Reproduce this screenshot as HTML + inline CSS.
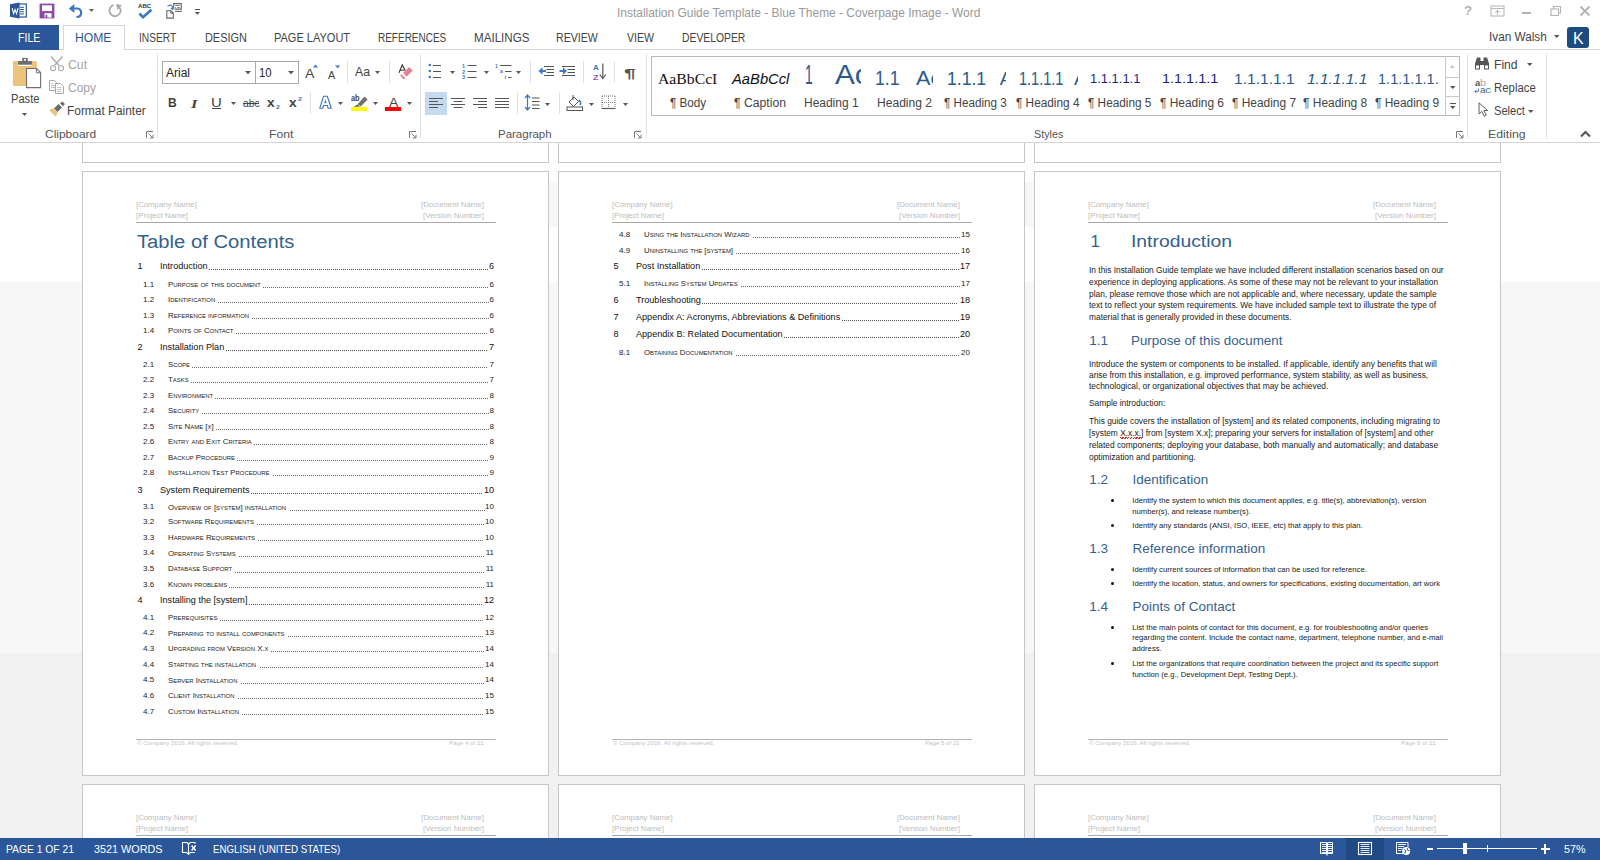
<!DOCTYPE html><html><head><meta charset="utf-8"><style>
html,body{margin:0;padding:0;width:1600px;height:860px;overflow:hidden;background:#fff;position:relative}
.t{position:absolute;white-space:pre;transform-origin:0 0}
.r{position:absolute}
svg{position:absolute;overflow:visible}
</style></head><body>
<div class="r" style="left:0px;top:143px;width:1600px;height:139px;background:#fefefe"></div>
<div class="r" style="left:0px;top:282px;width:1600px;height:371px;background:#f7f7f7"></div>
<div class="r" style="left:0px;top:653px;width:1600px;height:185px;background:#f1f1f1"></div>
<div class="r" style="left:549px;top:182px;width:9px;height:45px;background:#f7f7f7"></div>
<div class="r" style="left:1025px;top:182px;width:9px;height:45px;background:#f7f7f7"></div>
<div class="r" style="left:82px;top:100px;width:467px;height:63px;background:#ffffff;border:1px solid #c6c6c6;box-sizing:border-box"></div>
<div class="r" style="left:82px;top:171px;width:467px;height:605px;background:#ffffff;border:1px solid #c6c6c6;box-sizing:border-box"></div>
<div class="r" style="left:82px;top:784px;width:467px;height:116px;background:#ffffff;border:1px solid #c6c6c6;box-sizing:border-box"></div>
<div class="r" style="left:558px;top:100px;width:467px;height:63px;background:#ffffff;border:1px solid #c6c6c6;box-sizing:border-box"></div>
<div class="r" style="left:558px;top:171px;width:467px;height:605px;background:#ffffff;border:1px solid #c6c6c6;box-sizing:border-box"></div>
<div class="r" style="left:558px;top:784px;width:467px;height:116px;background:#ffffff;border:1px solid #c6c6c6;box-sizing:border-box"></div>
<div class="r" style="left:1034px;top:100px;width:467px;height:63px;background:#ffffff;border:1px solid #c6c6c6;box-sizing:border-box"></div>
<div class="r" style="left:1034px;top:171px;width:467px;height:605px;background:#ffffff;border:1px solid #c6c6c6;box-sizing:border-box"></div>
<div class="r" style="left:1034px;top:784px;width:467px;height:116px;background:#ffffff;border:1px solid #c6c6c6;box-sizing:border-box"></div>
<div class="t" style="left:136.15px;top:201.07px;font-size:7.6px;line-height:7.6px;color:#bdbdbd;font-family:'Liberation Sans',sans-serif;transform:scaleX(1.0258);">[Company Name]</div>
<div class="t" style="left:136.15px;top:211.77px;font-size:7.6px;line-height:7.6px;color:#bdbdbd;font-family:'Liberation Sans',sans-serif;transform:scaleX(1.0323);">[Project Name]</div>
<div class="t" style="left:421.25px;top:201.27px;font-size:7.6px;line-height:7.6px;color:#bdbdbd;font-family:'Liberation Sans',sans-serif;transform:scaleX(1.0267);">[Document Name]</div>
<div class="t" style="left:423.15px;top:211.77px;font-size:7.6px;line-height:7.6px;color:#bdbdbd;font-family:'Liberation Sans',sans-serif;transform:scaleX(1.0384);">[Version Number]</div>
<div class="r" style="left:136px;top:222px;width:360px;height:1px;background:#a8a8a8"></div>
<div class="t" style="left:136.15px;top:814.07px;font-size:7.6px;line-height:7.6px;color:#bdbdbd;font-family:'Liberation Sans',sans-serif;transform:scaleX(1.0258);">[Company Name]</div>
<div class="t" style="left:136.15px;top:824.77px;font-size:7.6px;line-height:7.6px;color:#bdbdbd;font-family:'Liberation Sans',sans-serif;transform:scaleX(1.0323);">[Project Name]</div>
<div class="t" style="left:421.25px;top:814.27px;font-size:7.6px;line-height:7.6px;color:#bdbdbd;font-family:'Liberation Sans',sans-serif;transform:scaleX(1.0267);">[Document Name]</div>
<div class="t" style="left:423.15px;top:824.77px;font-size:7.6px;line-height:7.6px;color:#bdbdbd;font-family:'Liberation Sans',sans-serif;transform:scaleX(1.0384);">[Version Number]</div>
<div class="r" style="left:136px;top:835px;width:360px;height:1px;background:#a8a8a8"></div>
<div class="r" style="left:136px;top:739px;width:360px;height:1px;background:#b4b4b4"></div>
<div class="t" style="left:136.91px;top:740.90px;font-size:5.2px;line-height:5.2px;color:#c4c4c4;font-family:'Liberation Sans',sans-serif;transform:scaleX(1.1789);">© Company 2016. All rights reserved.</div>
<div class="t" style="left:448.51px;top:740.90px;font-size:5.2px;line-height:5.2px;color:#c4c4c4;font-family:'Liberation Sans',sans-serif;transform:scaleX(1.1792);">Page 4 of 21</div>
<div class="t" style="left:612.15px;top:201.07px;font-size:7.6px;line-height:7.6px;color:#bdbdbd;font-family:'Liberation Sans',sans-serif;transform:scaleX(1.0258);">[Company Name]</div>
<div class="t" style="left:612.15px;top:211.77px;font-size:7.6px;line-height:7.6px;color:#bdbdbd;font-family:'Liberation Sans',sans-serif;transform:scaleX(1.0323);">[Project Name]</div>
<div class="t" style="left:897.25px;top:201.27px;font-size:7.6px;line-height:7.6px;color:#bdbdbd;font-family:'Liberation Sans',sans-serif;transform:scaleX(1.0267);">[Document Name]</div>
<div class="t" style="left:899.15px;top:211.77px;font-size:7.6px;line-height:7.6px;color:#bdbdbd;font-family:'Liberation Sans',sans-serif;transform:scaleX(1.0384);">[Version Number]</div>
<div class="r" style="left:612px;top:222px;width:360px;height:1px;background:#a8a8a8"></div>
<div class="t" style="left:612.15px;top:814.07px;font-size:7.6px;line-height:7.6px;color:#bdbdbd;font-family:'Liberation Sans',sans-serif;transform:scaleX(1.0258);">[Company Name]</div>
<div class="t" style="left:612.15px;top:824.77px;font-size:7.6px;line-height:7.6px;color:#bdbdbd;font-family:'Liberation Sans',sans-serif;transform:scaleX(1.0323);">[Project Name]</div>
<div class="t" style="left:897.25px;top:814.27px;font-size:7.6px;line-height:7.6px;color:#bdbdbd;font-family:'Liberation Sans',sans-serif;transform:scaleX(1.0267);">[Document Name]</div>
<div class="t" style="left:899.15px;top:824.77px;font-size:7.6px;line-height:7.6px;color:#bdbdbd;font-family:'Liberation Sans',sans-serif;transform:scaleX(1.0384);">[Version Number]</div>
<div class="r" style="left:612px;top:835px;width:360px;height:1px;background:#a8a8a8"></div>
<div class="r" style="left:612px;top:739px;width:360px;height:1px;background:#b4b4b4"></div>
<div class="t" style="left:612.91px;top:740.90px;font-size:5.2px;line-height:5.2px;color:#c4c4c4;font-family:'Liberation Sans',sans-serif;transform:scaleX(1.1789);">© Company 2016. All rights reserved.</div>
<div class="t" style="left:924.51px;top:740.90px;font-size:5.2px;line-height:5.2px;color:#c4c4c4;font-family:'Liberation Sans',sans-serif;transform:scaleX(1.1792);">Page 5 of 21</div>
<div class="t" style="left:1088.15px;top:201.07px;font-size:7.6px;line-height:7.6px;color:#bdbdbd;font-family:'Liberation Sans',sans-serif;transform:scaleX(1.0258);">[Company Name]</div>
<div class="t" style="left:1088.15px;top:211.77px;font-size:7.6px;line-height:7.6px;color:#bdbdbd;font-family:'Liberation Sans',sans-serif;transform:scaleX(1.0323);">[Project Name]</div>
<div class="t" style="left:1373.25px;top:201.27px;font-size:7.6px;line-height:7.6px;color:#bdbdbd;font-family:'Liberation Sans',sans-serif;transform:scaleX(1.0267);">[Document Name]</div>
<div class="t" style="left:1375.15px;top:211.77px;font-size:7.6px;line-height:7.6px;color:#bdbdbd;font-family:'Liberation Sans',sans-serif;transform:scaleX(1.0384);">[Version Number]</div>
<div class="r" style="left:1088px;top:222px;width:360px;height:1px;background:#a8a8a8"></div>
<div class="t" style="left:1088.15px;top:814.07px;font-size:7.6px;line-height:7.6px;color:#bdbdbd;font-family:'Liberation Sans',sans-serif;transform:scaleX(1.0258);">[Company Name]</div>
<div class="t" style="left:1088.15px;top:824.77px;font-size:7.6px;line-height:7.6px;color:#bdbdbd;font-family:'Liberation Sans',sans-serif;transform:scaleX(1.0323);">[Project Name]</div>
<div class="t" style="left:1373.25px;top:814.27px;font-size:7.6px;line-height:7.6px;color:#bdbdbd;font-family:'Liberation Sans',sans-serif;transform:scaleX(1.0267);">[Document Name]</div>
<div class="t" style="left:1375.15px;top:824.77px;font-size:7.6px;line-height:7.6px;color:#bdbdbd;font-family:'Liberation Sans',sans-serif;transform:scaleX(1.0384);">[Version Number]</div>
<div class="r" style="left:1088px;top:835px;width:360px;height:1px;background:#a8a8a8"></div>
<div class="r" style="left:1088px;top:739px;width:360px;height:1px;background:#b4b4b4"></div>
<div class="t" style="left:1088.91px;top:740.90px;font-size:5.2px;line-height:5.2px;color:#c4c4c4;font-family:'Liberation Sans',sans-serif;transform:scaleX(1.1789);">© Company 2016. All rights reserved.</div>
<div class="t" style="left:1400.51px;top:740.90px;font-size:5.2px;line-height:5.2px;color:#c4c4c4;font-family:'Liberation Sans',sans-serif;transform:scaleX(1.1792);">Page 6 of 21</div>
<div class="t" style="left:136.90px;top:232.76px;font-size:18px;line-height:18px;color:#35618e;font-family:'Liberation Sans',sans-serif;transform:scaleX(1.1233);">Table of Contents</div>
<div class="t" style="left:137.50px;top:262.10px;font-size:9.1px;line-height:9.1px;color:#111;font-family:'Liberation Sans',sans-serif;">1</div>
<div class="t" style="left:160.00px;top:262.10px;font-size:9.1px;line-height:9.1px;color:#111;font-family:'Liberation Sans',sans-serif;">Introduction</div>
<div class="t" style="left:488.94px;top:262.10px;font-size:9.1px;line-height:9.1px;color:#111;font-family:'Liberation Sans',sans-serif;">6</div>
<div class="r" style="left:209px;top:269px;width:279px;height:1px;background:repeating-linear-gradient(90deg,#505050 0 1px,transparent 1px 2px)"></div>
<div class="t" style="left:143.00px;top:280.53px;font-size:8px;line-height:8px;color:#222;font-family:'Liberation Sans',sans-serif;">1.1</div>
<div class="t" style="left:167.70px;top:280.70px;font-size:7.8px;line-height:7.8px;color:#222;font-family:'Liberation Sans',sans-serif;transform:scaleX(1.0030);">P<span style="font-size:0.76em">URPOSE</span> <span style="font-size:0.76em">OF</span> <span style="font-size:0.76em">THIS</span> <span style="font-size:0.76em">DOCUMENT</span></div>
<div class="t" style="left:489.55px;top:280.53px;font-size:8px;line-height:8px;color:#222;font-family:'Liberation Sans',sans-serif;">6</div>
<div class="r" style="left:263px;top:287px;width:225px;height:1px;background:repeating-linear-gradient(90deg,#6a6a6a 0 1px,transparent 1px 2px)"></div>
<div class="t" style="left:143.00px;top:295.93px;font-size:8px;line-height:8px;color:#222;font-family:'Liberation Sans',sans-serif;">1.2</div>
<div class="t" style="left:167.70px;top:296.10px;font-size:7.8px;line-height:7.8px;color:#222;font-family:'Liberation Sans',sans-serif;transform:scaleX(1.0030);">I<span style="font-size:0.76em">DENTIFICATION</span></div>
<div class="t" style="left:489.55px;top:295.93px;font-size:8px;line-height:8px;color:#222;font-family:'Liberation Sans',sans-serif;">6</div>
<div class="r" style="left:218px;top:302px;width:271px;height:1px;background:repeating-linear-gradient(90deg,#6a6a6a 0 1px,transparent 1px 2px)"></div>
<div class="t" style="left:143.00px;top:311.83px;font-size:8px;line-height:8px;color:#222;font-family:'Liberation Sans',sans-serif;">1.3</div>
<div class="t" style="left:167.70px;top:312.00px;font-size:7.8px;line-height:7.8px;color:#222;font-family:'Liberation Sans',sans-serif;transform:scaleX(1.0030);">R<span style="font-size:0.76em">EFERENCE</span> <span style="font-size:0.76em">INFORMATION</span></div>
<div class="t" style="left:489.55px;top:311.83px;font-size:8px;line-height:8px;color:#222;font-family:'Liberation Sans',sans-serif;">6</div>
<div class="r" style="left:252px;top:318px;width:237px;height:1px;background:repeating-linear-gradient(90deg,#6a6a6a 0 1px,transparent 1px 2px)"></div>
<div class="t" style="left:143.00px;top:327.13px;font-size:8px;line-height:8px;color:#222;font-family:'Liberation Sans',sans-serif;">1.4</div>
<div class="t" style="left:167.70px;top:327.30px;font-size:7.8px;line-height:7.8px;color:#222;font-family:'Liberation Sans',sans-serif;transform:scaleX(1.0030);">P<span style="font-size:0.76em">OINTS</span> <span style="font-size:0.76em">OF</span> C<span style="font-size:0.76em">ONTACT</span></div>
<div class="t" style="left:489.55px;top:327.13px;font-size:8px;line-height:8px;color:#222;font-family:'Liberation Sans',sans-serif;">6</div>
<div class="r" style="left:236px;top:333px;width:252px;height:1px;background:repeating-linear-gradient(90deg,#6a6a6a 0 1px,transparent 1px 2px)"></div>
<div class="t" style="left:137.50px;top:342.90px;font-size:9.1px;line-height:9.1px;color:#111;font-family:'Liberation Sans',sans-serif;">2</div>
<div class="t" style="left:160.00px;top:342.90px;font-size:9.1px;line-height:9.1px;color:#111;font-family:'Liberation Sans',sans-serif;">Installation Plan</div>
<div class="t" style="left:488.94px;top:342.90px;font-size:9.1px;line-height:9.1px;color:#111;font-family:'Liberation Sans',sans-serif;">7</div>
<div class="r" style="left:226px;top:350px;width:262px;height:1px;background:repeating-linear-gradient(90deg,#505050 0 1px,transparent 1px 2px)"></div>
<div class="t" style="left:143.00px;top:360.63px;font-size:8px;line-height:8px;color:#222;font-family:'Liberation Sans',sans-serif;">2.1</div>
<div class="t" style="left:167.70px;top:360.80px;font-size:7.8px;line-height:7.8px;color:#222;font-family:'Liberation Sans',sans-serif;transform:scaleX(1.0030);">S<span style="font-size:0.76em">COPE</span></div>
<div class="t" style="left:489.55px;top:360.63px;font-size:8px;line-height:8px;color:#222;font-family:'Liberation Sans',sans-serif;">7</div>
<div class="r" style="left:192px;top:367px;width:296px;height:1px;background:repeating-linear-gradient(90deg,#6a6a6a 0 1px,transparent 1px 2px)"></div>
<div class="t" style="left:143.00px;top:375.93px;font-size:8px;line-height:8px;color:#222;font-family:'Liberation Sans',sans-serif;">2.2</div>
<div class="t" style="left:167.70px;top:376.10px;font-size:7.8px;line-height:7.8px;color:#222;font-family:'Liberation Sans',sans-serif;transform:scaleX(1.0030);">T<span style="font-size:0.76em">ASKS</span></div>
<div class="t" style="left:489.55px;top:375.93px;font-size:8px;line-height:8px;color:#222;font-family:'Liberation Sans',sans-serif;">7</div>
<div class="r" style="left:191px;top:382px;width:298px;height:1px;background:repeating-linear-gradient(90deg,#6a6a6a 0 1px,transparent 1px 2px)"></div>
<div class="t" style="left:143.00px;top:391.83px;font-size:8px;line-height:8px;color:#222;font-family:'Liberation Sans',sans-serif;">2.3</div>
<div class="t" style="left:167.70px;top:392.00px;font-size:7.8px;line-height:7.8px;color:#222;font-family:'Liberation Sans',sans-serif;transform:scaleX(1.0030);">E<span style="font-size:0.76em">NVIRONMENT</span></div>
<div class="t" style="left:489.55px;top:391.83px;font-size:8px;line-height:8px;color:#222;font-family:'Liberation Sans',sans-serif;">8</div>
<div class="r" style="left:215px;top:398px;width:273px;height:1px;background:repeating-linear-gradient(90deg,#6a6a6a 0 1px,transparent 1px 2px)"></div>
<div class="t" style="left:143.00px;top:406.63px;font-size:8px;line-height:8px;color:#222;font-family:'Liberation Sans',sans-serif;">2.4</div>
<div class="t" style="left:167.70px;top:406.80px;font-size:7.8px;line-height:7.8px;color:#222;font-family:'Liberation Sans',sans-serif;transform:scaleX(1.0030);">S<span style="font-size:0.76em">ECURITY</span></div>
<div class="t" style="left:489.55px;top:406.63px;font-size:8px;line-height:8px;color:#222;font-family:'Liberation Sans',sans-serif;">8</div>
<div class="r" style="left:202px;top:413px;width:287px;height:1px;background:repeating-linear-gradient(90deg,#6a6a6a 0 1px,transparent 1px 2px)"></div>
<div class="t" style="left:143.00px;top:422.83px;font-size:8px;line-height:8px;color:#222;font-family:'Liberation Sans',sans-serif;">2.5</div>
<div class="t" style="left:167.70px;top:423.00px;font-size:7.8px;line-height:7.8px;color:#222;font-family:'Liberation Sans',sans-serif;transform:scaleX(1.0030);">S<span style="font-size:0.76em">ITE</span> N<span style="font-size:0.76em">AME</span> [<span style="font-size:0.76em">X</span>]</div>
<div class="t" style="left:489.55px;top:422.83px;font-size:8px;line-height:8px;color:#222;font-family:'Liberation Sans',sans-serif;">8</div>
<div class="r" style="left:216px;top:429px;width:273px;height:1px;background:repeating-linear-gradient(90deg,#6a6a6a 0 1px,transparent 1px 2px)"></div>
<div class="t" style="left:143.00px;top:437.83px;font-size:8px;line-height:8px;color:#222;font-family:'Liberation Sans',sans-serif;">2.6</div>
<div class="t" style="left:167.70px;top:438.00px;font-size:7.8px;line-height:7.8px;color:#222;font-family:'Liberation Sans',sans-serif;transform:scaleX(1.0030);">E<span style="font-size:0.76em">NTRY</span> <span style="font-size:0.76em">AND</span> E<span style="font-size:0.76em">XIT</span> C<span style="font-size:0.76em">RITERIA</span></div>
<div class="t" style="left:489.55px;top:437.83px;font-size:8px;line-height:8px;color:#222;font-family:'Liberation Sans',sans-serif;">8</div>
<div class="r" style="left:254px;top:444px;width:234px;height:1px;background:repeating-linear-gradient(90deg,#6a6a6a 0 1px,transparent 1px 2px)"></div>
<div class="t" style="left:143.00px;top:453.53px;font-size:8px;line-height:8px;color:#222;font-family:'Liberation Sans',sans-serif;">2.7</div>
<div class="t" style="left:167.70px;top:453.70px;font-size:7.8px;line-height:7.8px;color:#222;font-family:'Liberation Sans',sans-serif;transform:scaleX(1.0030);">B<span style="font-size:0.76em">ACKUP</span> P<span style="font-size:0.76em">ROCEDURE</span></div>
<div class="t" style="left:489.55px;top:453.53px;font-size:8px;line-height:8px;color:#222;font-family:'Liberation Sans',sans-serif;">9</div>
<div class="r" style="left:237px;top:460px;width:251px;height:1px;background:repeating-linear-gradient(90deg,#6a6a6a 0 1px,transparent 1px 2px)"></div>
<div class="t" style="left:143.00px;top:468.83px;font-size:8px;line-height:8px;color:#222;font-family:'Liberation Sans',sans-serif;">2.8</div>
<div class="t" style="left:167.70px;top:469.00px;font-size:7.8px;line-height:7.8px;color:#222;font-family:'Liberation Sans',sans-serif;transform:scaleX(1.0030);">I<span style="font-size:0.76em">NSTALLATION</span> T<span style="font-size:0.76em">EST</span> P<span style="font-size:0.76em">ROCEDURE</span></div>
<div class="t" style="left:489.55px;top:468.83px;font-size:8px;line-height:8px;color:#222;font-family:'Liberation Sans',sans-serif;">9</div>
<div class="r" style="left:273px;top:475px;width:216px;height:1px;background:repeating-linear-gradient(90deg,#6a6a6a 0 1px,transparent 1px 2px)"></div>
<div class="t" style="left:137.50px;top:485.70px;font-size:9.1px;line-height:9.1px;color:#111;font-family:'Liberation Sans',sans-serif;">3</div>
<div class="t" style="left:160.00px;top:485.70px;font-size:9.1px;line-height:9.1px;color:#111;font-family:'Liberation Sans',sans-serif;">System Requirements</div>
<div class="t" style="left:483.88px;top:485.70px;font-size:9.1px;line-height:9.1px;color:#111;font-family:'Liberation Sans',sans-serif;">10</div>
<div class="r" style="left:251px;top:493px;width:232px;height:1px;background:repeating-linear-gradient(90deg,#505050 0 1px,transparent 1px 2px)"></div>
<div class="t" style="left:143.00px;top:503.33px;font-size:8px;line-height:8px;color:#222;font-family:'Liberation Sans',sans-serif;">3.1</div>
<div class="t" style="left:167.70px;top:503.50px;font-size:7.8px;line-height:7.8px;color:#222;font-family:'Liberation Sans',sans-serif;transform:scaleX(1.0030);">O<span style="font-size:0.76em">VERVIEW</span> <span style="font-size:0.76em">OF</span> [<span style="font-size:0.76em">SYSTEM</span>] <span style="font-size:0.76em">INSTALLATION</span></div>
<div class="t" style="left:485.10px;top:503.33px;font-size:8px;line-height:8px;color:#222;font-family:'Liberation Sans',sans-serif;">10</div>
<div class="r" style="left:290px;top:510px;width:195px;height:1px;background:repeating-linear-gradient(90deg,#6a6a6a 0 1px,transparent 1px 2px)"></div>
<div class="t" style="left:143.00px;top:518.13px;font-size:8px;line-height:8px;color:#222;font-family:'Liberation Sans',sans-serif;">3.2</div>
<div class="t" style="left:167.70px;top:518.30px;font-size:7.8px;line-height:7.8px;color:#222;font-family:'Liberation Sans',sans-serif;transform:scaleX(1.0030);">S<span style="font-size:0.76em">OFTWARE</span> R<span style="font-size:0.76em">EQUIREMENTS</span></div>
<div class="t" style="left:485.10px;top:518.13px;font-size:8px;line-height:8px;color:#222;font-family:'Liberation Sans',sans-serif;">10</div>
<div class="r" style="left:257px;top:524px;width:228px;height:1px;background:repeating-linear-gradient(90deg,#6a6a6a 0 1px,transparent 1px 2px)"></div>
<div class="t" style="left:143.00px;top:534.03px;font-size:8px;line-height:8px;color:#222;font-family:'Liberation Sans',sans-serif;">3.3</div>
<div class="t" style="left:167.70px;top:534.20px;font-size:7.8px;line-height:7.8px;color:#222;font-family:'Liberation Sans',sans-serif;transform:scaleX(1.0030);">H<span style="font-size:0.76em">ARDWARE</span> R<span style="font-size:0.76em">EQUIREMENTS</span></div>
<div class="t" style="left:485.10px;top:534.03px;font-size:8px;line-height:8px;color:#222;font-family:'Liberation Sans',sans-serif;">10</div>
<div class="r" style="left:258px;top:540px;width:226px;height:1px;background:repeating-linear-gradient(90deg,#6a6a6a 0 1px,transparent 1px 2px)"></div>
<div class="t" style="left:143.00px;top:549.33px;font-size:8px;line-height:8px;color:#222;font-family:'Liberation Sans',sans-serif;">3.4</div>
<div class="t" style="left:167.70px;top:549.50px;font-size:7.8px;line-height:7.8px;color:#222;font-family:'Liberation Sans',sans-serif;transform:scaleX(1.0030);">O<span style="font-size:0.76em">PERATING</span> S<span style="font-size:0.76em">YSTEMS</span></div>
<div class="t" style="left:485.69px;top:549.33px;font-size:8px;line-height:8px;color:#222;font-family:'Liberation Sans',sans-serif;">11</div>
<div class="r" style="left:239px;top:556px;width:246px;height:1px;background:repeating-linear-gradient(90deg,#6a6a6a 0 1px,transparent 1px 2px)"></div>
<div class="t" style="left:143.00px;top:565.23px;font-size:8px;line-height:8px;color:#222;font-family:'Liberation Sans',sans-serif;">3.5</div>
<div class="t" style="left:167.70px;top:565.40px;font-size:7.8px;line-height:7.8px;color:#222;font-family:'Liberation Sans',sans-serif;transform:scaleX(1.0030);">D<span style="font-size:0.76em">ATABASE</span> S<span style="font-size:0.76em">UPPORT</span></div>
<div class="t" style="left:485.69px;top:565.23px;font-size:8px;line-height:8px;color:#222;font-family:'Liberation Sans',sans-serif;">11</div>
<div class="r" style="left:235px;top:572px;width:249px;height:1px;background:repeating-linear-gradient(90deg,#6a6a6a 0 1px,transparent 1px 2px)"></div>
<div class="t" style="left:143.00px;top:580.93px;font-size:8px;line-height:8px;color:#222;font-family:'Liberation Sans',sans-serif;">3.6</div>
<div class="t" style="left:167.70px;top:581.10px;font-size:7.8px;line-height:7.8px;color:#222;font-family:'Liberation Sans',sans-serif;transform:scaleX(1.0030);">K<span style="font-size:0.76em">NOWN</span> <span style="font-size:0.76em">PROBLEMS</span></div>
<div class="t" style="left:485.69px;top:580.93px;font-size:8px;line-height:8px;color:#222;font-family:'Liberation Sans',sans-serif;">11</div>
<div class="r" style="left:229px;top:587px;width:255px;height:1px;background:repeating-linear-gradient(90deg,#6a6a6a 0 1px,transparent 1px 2px)"></div>
<div class="t" style="left:137.50px;top:596.40px;font-size:9.1px;line-height:9.1px;color:#111;font-family:'Liberation Sans',sans-serif;">4</div>
<div class="t" style="left:160.00px;top:596.40px;font-size:9.1px;line-height:9.1px;color:#111;font-family:'Liberation Sans',sans-serif;">Installing the [system]</div>
<div class="t" style="left:483.88px;top:596.40px;font-size:9.1px;line-height:9.1px;color:#111;font-family:'Liberation Sans',sans-serif;">12</div>
<div class="r" style="left:249px;top:604px;width:234px;height:1px;background:repeating-linear-gradient(90deg,#505050 0 1px,transparent 1px 2px)"></div>
<div class="t" style="left:143.00px;top:614.03px;font-size:8px;line-height:8px;color:#222;font-family:'Liberation Sans',sans-serif;">4.1</div>
<div class="t" style="left:167.70px;top:614.20px;font-size:7.8px;line-height:7.8px;color:#222;font-family:'Liberation Sans',sans-serif;transform:scaleX(1.0030);">P<span style="font-size:0.76em">REREQUISITES</span></div>
<div class="t" style="left:485.10px;top:614.03px;font-size:8px;line-height:8px;color:#222;font-family:'Liberation Sans',sans-serif;">12</div>
<div class="r" style="left:220px;top:620px;width:264px;height:1px;background:repeating-linear-gradient(90deg,#6a6a6a 0 1px,transparent 1px 2px)"></div>
<div class="t" style="left:143.00px;top:629.43px;font-size:8px;line-height:8px;color:#222;font-family:'Liberation Sans',sans-serif;">4.2</div>
<div class="t" style="left:167.70px;top:629.60px;font-size:7.8px;line-height:7.8px;color:#222;font-family:'Liberation Sans',sans-serif;transform:scaleX(1.0030);">P<span style="font-size:0.76em">REPARING</span> <span style="font-size:0.76em">TO</span> <span style="font-size:0.76em">INSTALL</span> <span style="font-size:0.76em">COMPONENTS</span></div>
<div class="t" style="left:485.10px;top:629.43px;font-size:8px;line-height:8px;color:#222;font-family:'Liberation Sans',sans-serif;">13</div>
<div class="r" style="left:288px;top:636px;width:196px;height:1px;background:repeating-linear-gradient(90deg,#6a6a6a 0 1px,transparent 1px 2px)"></div>
<div class="t" style="left:143.00px;top:645.03px;font-size:8px;line-height:8px;color:#222;font-family:'Liberation Sans',sans-serif;">4.3</div>
<div class="t" style="left:167.70px;top:645.20px;font-size:7.8px;line-height:7.8px;color:#222;font-family:'Liberation Sans',sans-serif;transform:scaleX(1.0030);">U<span style="font-size:0.76em">PGRADING</span> <span style="font-size:0.76em">FROM</span> V<span style="font-size:0.76em">ERSION</span> X.<span style="font-size:0.76em">X</span></div>
<div class="t" style="left:485.10px;top:645.03px;font-size:8px;line-height:8px;color:#222;font-family:'Liberation Sans',sans-serif;">14</div>
<div class="r" style="left:271px;top:651px;width:213px;height:1px;background:repeating-linear-gradient(90deg,#6a6a6a 0 1px,transparent 1px 2px)"></div>
<div class="t" style="left:143.00px;top:661.03px;font-size:8px;line-height:8px;color:#222;font-family:'Liberation Sans',sans-serif;">4.4</div>
<div class="t" style="left:167.70px;top:661.20px;font-size:7.8px;line-height:7.8px;color:#222;font-family:'Liberation Sans',sans-serif;transform:scaleX(1.0030);">S<span style="font-size:0.76em">TARTING</span> <span style="font-size:0.76em">THE</span> <span style="font-size:0.76em">INSTALLATION</span></div>
<div class="t" style="left:485.10px;top:661.03px;font-size:8px;line-height:8px;color:#222;font-family:'Liberation Sans',sans-serif;">14</div>
<div class="r" style="left:260px;top:667px;width:224px;height:1px;background:repeating-linear-gradient(90deg,#6a6a6a 0 1px,transparent 1px 2px)"></div>
<div class="t" style="left:143.00px;top:676.33px;font-size:8px;line-height:8px;color:#222;font-family:'Liberation Sans',sans-serif;">4.5</div>
<div class="t" style="left:167.70px;top:676.50px;font-size:7.8px;line-height:7.8px;color:#222;font-family:'Liberation Sans',sans-serif;transform:scaleX(1.0030);">S<span style="font-size:0.76em">ERVER</span> I<span style="font-size:0.76em">NSTALLATION</span></div>
<div class="t" style="left:485.10px;top:676.33px;font-size:8px;line-height:8px;color:#222;font-family:'Liberation Sans',sans-serif;">14</div>
<div class="r" style="left:241px;top:683px;width:243px;height:1px;background:repeating-linear-gradient(90deg,#6a6a6a 0 1px,transparent 1px 2px)"></div>
<div class="t" style="left:143.00px;top:692.23px;font-size:8px;line-height:8px;color:#222;font-family:'Liberation Sans',sans-serif;">4.6</div>
<div class="t" style="left:167.70px;top:692.40px;font-size:7.8px;line-height:7.8px;color:#222;font-family:'Liberation Sans',sans-serif;transform:scaleX(1.0030);">C<span style="font-size:0.76em">LIENT</span> I<span style="font-size:0.76em">NSTALLATION</span></div>
<div class="t" style="left:485.10px;top:692.23px;font-size:8px;line-height:8px;color:#222;font-family:'Liberation Sans',sans-serif;">15</div>
<div class="r" style="left:238px;top:698px;width:246px;height:1px;background:repeating-linear-gradient(90deg,#6a6a6a 0 1px,transparent 1px 2px)"></div>
<div class="t" style="left:143.00px;top:707.53px;font-size:8px;line-height:8px;color:#222;font-family:'Liberation Sans',sans-serif;">4.7</div>
<div class="t" style="left:167.70px;top:707.70px;font-size:7.8px;line-height:7.8px;color:#222;font-family:'Liberation Sans',sans-serif;transform:scaleX(1.0030);">C<span style="font-size:0.76em">USTOM</span> I<span style="font-size:0.76em">NSTALLATION</span></div>
<div class="t" style="left:485.10px;top:707.53px;font-size:8px;line-height:8px;color:#222;font-family:'Liberation Sans',sans-serif;">15</div>
<div class="r" style="left:242px;top:714px;width:242px;height:1px;background:repeating-linear-gradient(90deg,#6a6a6a 0 1px,transparent 1px 2px)"></div>
<div class="t" style="left:619.00px;top:231.03px;font-size:8px;line-height:8px;color:#222;font-family:'Liberation Sans',sans-serif;">4.8</div>
<div class="t" style="left:643.70px;top:231.20px;font-size:7.8px;line-height:7.8px;color:#222;font-family:'Liberation Sans',sans-serif;transform:scaleX(1.0030);">U<span style="font-size:0.76em">SING</span> <span style="font-size:0.76em">THE</span> I<span style="font-size:0.76em">NSTALLATION</span> W<span style="font-size:0.76em">IZARD</span></div>
<div class="t" style="left:961.10px;top:231.03px;font-size:8px;line-height:8px;color:#222;font-family:'Liberation Sans',sans-serif;">15</div>
<div class="r" style="left:753px;top:237px;width:207px;height:1px;background:repeating-linear-gradient(90deg,#6a6a6a 0 1px,transparent 1px 2px)"></div>
<div class="t" style="left:619.00px;top:246.83px;font-size:8px;line-height:8px;color:#222;font-family:'Liberation Sans',sans-serif;">4.9</div>
<div class="t" style="left:643.70px;top:247.00px;font-size:7.8px;line-height:7.8px;color:#222;font-family:'Liberation Sans',sans-serif;transform:scaleX(1.0030);">U<span style="font-size:0.76em">NINSTALLING</span> <span style="font-size:0.76em">THE</span> [<span style="font-size:0.76em">SYSTEM</span>]</div>
<div class="t" style="left:961.10px;top:246.83px;font-size:8px;line-height:8px;color:#222;font-family:'Liberation Sans',sans-serif;">16</div>
<div class="r" style="left:736px;top:253px;width:224px;height:1px;background:repeating-linear-gradient(90deg,#6a6a6a 0 1px,transparent 1px 2px)"></div>
<div class="t" style="left:613.50px;top:262.10px;font-size:9.1px;line-height:9.1px;color:#111;font-family:'Liberation Sans',sans-serif;">5</div>
<div class="t" style="left:636.00px;top:262.10px;font-size:9.1px;line-height:9.1px;color:#111;font-family:'Liberation Sans',sans-serif;">Post Installation</div>
<div class="t" style="left:959.88px;top:262.10px;font-size:9.1px;line-height:9.1px;color:#111;font-family:'Liberation Sans',sans-serif;">17</div>
<div class="r" style="left:702px;top:269px;width:257px;height:1px;background:repeating-linear-gradient(90deg,#505050 0 1px,transparent 1px 2px)"></div>
<div class="t" style="left:619.00px;top:279.83px;font-size:8px;line-height:8px;color:#222;font-family:'Liberation Sans',sans-serif;">5.1</div>
<div class="t" style="left:643.70px;top:280.00px;font-size:7.8px;line-height:7.8px;color:#222;font-family:'Liberation Sans',sans-serif;transform:scaleX(1.0030);">I<span style="font-size:0.76em">NSTALLING</span> S<span style="font-size:0.76em">YSTEM</span> U<span style="font-size:0.76em">PDATES</span></div>
<div class="t" style="left:961.10px;top:279.83px;font-size:8px;line-height:8px;color:#222;font-family:'Liberation Sans',sans-serif;">17</div>
<div class="r" style="left:741px;top:286px;width:219px;height:1px;background:repeating-linear-gradient(90deg,#6a6a6a 0 1px,transparent 1px 2px)"></div>
<div class="t" style="left:613.50px;top:296.10px;font-size:9.1px;line-height:9.1px;color:#111;font-family:'Liberation Sans',sans-serif;">6</div>
<div class="t" style="left:636.00px;top:296.10px;font-size:9.1px;line-height:9.1px;color:#111;font-family:'Liberation Sans',sans-serif;">Troubleshooting</div>
<div class="t" style="left:959.88px;top:296.10px;font-size:9.1px;line-height:9.1px;color:#111;font-family:'Liberation Sans',sans-serif;">18</div>
<div class="r" style="left:702px;top:303px;width:256px;height:1px;background:repeating-linear-gradient(90deg,#505050 0 1px,transparent 1px 2px)"></div>
<div class="t" style="left:613.50px;top:312.80px;font-size:9.1px;line-height:9.1px;color:#111;font-family:'Liberation Sans',sans-serif;">7</div>
<div class="t" style="left:636.00px;top:312.80px;font-size:9.1px;line-height:9.1px;color:#111;font-family:'Liberation Sans',sans-serif;">Appendix A: Acronyms, Abbreviations &amp; Definitions</div>
<div class="t" style="left:959.88px;top:312.80px;font-size:9.1px;line-height:9.1px;color:#111;font-family:'Liberation Sans',sans-serif;">19</div>
<div class="r" style="left:842px;top:320px;width:117px;height:1px;background:repeating-linear-gradient(90deg,#505050 0 1px,transparent 1px 2px)"></div>
<div class="t" style="left:613.50px;top:330.00px;font-size:9.1px;line-height:9.1px;color:#111;font-family:'Liberation Sans',sans-serif;">8</div>
<div class="t" style="left:636.00px;top:330.00px;font-size:9.1px;line-height:9.1px;color:#111;font-family:'Liberation Sans',sans-serif;">Appendix B: Related Documentation</div>
<div class="t" style="left:959.88px;top:330.00px;font-size:9.1px;line-height:9.1px;color:#111;font-family:'Liberation Sans',sans-serif;">20</div>
<div class="r" style="left:784px;top:337px;width:175px;height:1px;background:repeating-linear-gradient(90deg,#505050 0 1px,transparent 1px 2px)"></div>
<div class="t" style="left:619.00px;top:348.63px;font-size:8px;line-height:8px;color:#222;font-family:'Liberation Sans',sans-serif;">8.1</div>
<div class="t" style="left:643.70px;top:348.80px;font-size:7.8px;line-height:7.8px;color:#222;font-family:'Liberation Sans',sans-serif;transform:scaleX(1.0030);">O<span style="font-size:0.76em">BTAINING</span> D<span style="font-size:0.76em">OCUMENTATION</span></div>
<div class="t" style="left:961.10px;top:348.63px;font-size:8px;line-height:8px;color:#222;font-family:'Liberation Sans',sans-serif;">20</div>
<div class="r" style="left:736px;top:355px;width:224px;height:1px;background:repeating-linear-gradient(90deg,#6a6a6a 0 1px,transparent 1px 2px)"></div>
<div class="t" style="left:1090.60px;top:232.61px;font-size:17px;line-height:17px;color:#35618e;font-family:'Liberation Sans',sans-serif;">1</div>
<div class="t" style="left:1130.66px;top:232.61px;font-size:17px;line-height:17px;color:#35618e;font-family:'Liberation Sans',sans-serif;transform:scaleX(1.1371);">Introduction</div>
<div class="t" style="left:1089.00px;top:266.39px;font-size:8.4px;line-height:8.4px;color:#1a1a1a;font-family:'Liberation Sans',sans-serif;">In this Installation Guide template we have included different installation scenarios based on our</div>
<div class="t" style="left:1089.00px;top:278.09px;font-size:8.4px;line-height:8.4px;color:#1a1a1a;font-family:'Liberation Sans',sans-serif;">experience in deploying applications. As some of these may not be relevant to your installation</div>
<div class="t" style="left:1089.00px;top:289.79px;font-size:8.4px;line-height:8.4px;color:#1a1a1a;font-family:'Liberation Sans',sans-serif;">plan, please remove those which are not applicable and, where necessary, update the sample</div>
<div class="t" style="left:1089.00px;top:301.49px;font-size:8.4px;line-height:8.4px;color:#1a1a1a;font-family:'Liberation Sans',sans-serif;">text to reflect your system requirements. We have included sample text to illustrate the type of</div>
<div class="t" style="left:1089.00px;top:312.99px;font-size:8.4px;line-height:8.4px;color:#1a1a1a;font-family:'Liberation Sans',sans-serif;">material that is generally provided in these documents.</div>
<div class="t" style="left:1089.00px;top:359.59px;font-size:8.4px;line-height:8.4px;color:#1a1a1a;font-family:'Liberation Sans',sans-serif;">Introduce the system or components to be installed. If applicable, identify any benefits that will</div>
<div class="t" style="left:1089.00px;top:371.49px;font-size:8.4px;line-height:8.4px;color:#1a1a1a;font-family:'Liberation Sans',sans-serif;">arise from this installation, e.g. improved performance, system stability, as well as business,</div>
<div class="t" style="left:1089.00px;top:382.49px;font-size:8.4px;line-height:8.4px;color:#1a1a1a;font-family:'Liberation Sans',sans-serif;">technological, or organizational objectives that may be achieved.</div>
<div class="t" style="left:1089.00px;top:398.99px;font-size:8.4px;line-height:8.4px;color:#1a1a1a;font-family:'Liberation Sans',sans-serif;">Sample introduction:</div>
<div class="t" style="left:1089.00px;top:417.49px;font-size:8.4px;line-height:8.4px;color:#1a1a1a;font-family:'Liberation Sans',sans-serif;">This guide covers the installation of [system] and its related components, including migrating to</div>
<div class="t" style="left:1089.00px;top:429.19px;font-size:8.4px;line-height:8.4px;color:#1a1a1a;font-family:'Liberation Sans',sans-serif;">[system X.x.x.] from [system X.x]; preparing your servers for installation of [system] and other</div>
<div class="t" style="left:1089.00px;top:441.29px;font-size:8.4px;line-height:8.4px;color:#1a1a1a;font-family:'Liberation Sans',sans-serif;">related components; deploying your database, both manually and automatically; and database</div>
<div class="t" style="left:1089.00px;top:452.59px;font-size:8.4px;line-height:8.4px;color:#1a1a1a;font-family:'Liberation Sans',sans-serif;">optimization and partitioning.</div>
<div class="t" style="left:1089.30px;top:333.97px;font-size:13.5px;line-height:13.5px;color:#35618e;font-family:'Liberation Sans',sans-serif;">1.1</div>
<div class="t" style="left:1131.43px;top:333.97px;font-size:13.5px;line-height:13.5px;color:#35618e;font-family:'Liberation Sans',sans-serif;transform:scaleX(0.9890);">Purpose of this document</div>
<div class="t" style="left:1089.30px;top:473.37px;font-size:13.5px;line-height:13.5px;color:#35618e;font-family:'Liberation Sans',sans-serif;">1.2</div>
<div class="t" style="left:1132.50px;top:473.37px;font-size:13.5px;line-height:13.5px;color:#35618e;font-family:'Liberation Sans',sans-serif;">Identification</div>
<div class="t" style="left:1089.30px;top:542.27px;font-size:13.5px;line-height:13.5px;color:#35618e;font-family:'Liberation Sans',sans-serif;">1.3</div>
<div class="t" style="left:1132.50px;top:542.27px;font-size:13.5px;line-height:13.5px;color:#35618e;font-family:'Liberation Sans',sans-serif;">Reference information</div>
<div class="t" style="left:1089.30px;top:600.37px;font-size:13.5px;line-height:13.5px;color:#35618e;font-family:'Liberation Sans',sans-serif;">1.4</div>
<div class="t" style="left:1132.50px;top:600.37px;font-size:13.5px;line-height:13.5px;color:#35618e;font-family:'Liberation Sans',sans-serif;">Points of Contact</div>
<div class="r" style="left:1111.3px;top:499.2px;width:3px;height:3px;background:#111;border-radius:50%"></div>
<div class="t" style="left:1132.30px;top:497.02px;font-size:7.66px;line-height:7.66px;color:#1a1a1a;font-family:'Liberation Sans',sans-serif;">Identify the system to which this document applies, e.g. title(s), abbreviation(s), version</div>
<div class="t" style="left:1132.30px;top:508.02px;font-size:7.66px;line-height:7.66px;color:#1a1a1a;font-family:'Liberation Sans',sans-serif;">number(s), and release number(s).</div>
<div class="r" style="left:1111.3px;top:524.0px;width:3px;height:3px;background:#111;border-radius:50%"></div>
<div class="t" style="left:1132.30px;top:521.82px;font-size:7.66px;line-height:7.66px;color:#1a1a1a;font-family:'Liberation Sans',sans-serif;">Identify any standards (ANSI, ISO, IEEE, etc) that apply to this plan.</div>
<div class="r" style="left:1111.3px;top:568.0px;width:3px;height:3px;background:#111;border-radius:50%"></div>
<div class="t" style="left:1132.30px;top:565.82px;font-size:7.66px;line-height:7.66px;color:#1a1a1a;font-family:'Liberation Sans',sans-serif;">Identify current sources of information that can be used for reference.</div>
<div class="r" style="left:1111.3px;top:582.1px;width:3px;height:3px;background:#111;border-radius:50%"></div>
<div class="t" style="left:1132.30px;top:579.92px;font-size:7.66px;line-height:7.66px;color:#1a1a1a;font-family:'Liberation Sans',sans-serif;">Identify the location, status, and owners for specifications, existing documentation, art work</div>
<div class="r" style="left:1111.3px;top:626.1px;width:3px;height:3px;background:#111;border-radius:50%"></div>
<div class="t" style="left:1132.30px;top:623.92px;font-size:7.66px;line-height:7.66px;color:#1a1a1a;font-family:'Liberation Sans',sans-serif;">List the main points of contact for this document, e.g. for troubleshooting and/or queries</div>
<div class="t" style="left:1132.30px;top:633.82px;font-size:7.66px;line-height:7.66px;color:#1a1a1a;font-family:'Liberation Sans',sans-serif;">regarding the content. Include the contact name, department, telephone number, and e-mail</div>
<div class="t" style="left:1132.30px;top:645.32px;font-size:7.66px;line-height:7.66px;color:#1a1a1a;font-family:'Liberation Sans',sans-serif;">address.</div>
<div class="r" style="left:1111.3px;top:662.2px;width:3px;height:3px;background:#111;border-radius:50%"></div>
<div class="t" style="left:1132.30px;top:660.02px;font-size:7.66px;line-height:7.66px;color:#1a1a1a;font-family:'Liberation Sans',sans-serif;">List the organizations that require coordination between the project and its specific support</div>
<div class="t" style="left:1132.30px;top:671.02px;font-size:7.66px;line-height:7.66px;color:#1a1a1a;font-family:'Liberation Sans',sans-serif;">function (e.g., Development Dept, Testing Dept.).</div>
<div class="r" style="left:1120px;top:437px;width:22px;height:2px;background:repeating-linear-gradient(135deg,#e02020 0 1px,transparent 1px 2px)"></div>
<div class="r" style="left:0px;top:0px;width:1600px;height:143px;background:#ffffff"></div>
<div class="r" style="left:0px;top:838px;width:1600px;height:22px;background:#2b579a"></div>
<div class="r" style="left:0px;top:49px;width:63px;height:1px;background:#d5d5d5"></div>
<div class="r" style="left:124px;top:49px;width:1476px;height:1px;background:#d5d5d5"></div>
<div class="r" style="left:0px;top:142px;width:1600px;height:1px;background:#d5d5d5"></div>
<div class="r" style="left:0px;top:25px;width:59px;height:25px;background:#2b579a"></div>
<div class="r" style="left:63px;top:25px;width:1px;height:25px;background:#d5d5d5"></div>
<div class="r" style="left:63px;top:25px;width:62px;height:1px;background:#d5d5d5"></div>
<div class="r" style="left:124px;top:25px;width:1px;height:25px;background:#d5d5d5"></div>
<div class="t" style="left:616.92px;top:6.84px;font-size:12px;line-height:12px;color:#999999;font-family:'Liberation Sans',sans-serif;transform:scaleX(0.9957);">Installation Guide Template - Blue Theme - Coverpage Image - Word</div>
<div class="t" style="left:18.16px;top:31.84px;font-size:12px;line-height:12px;color:#ffffff;font-family:'Liberation Sans',sans-serif;transform:scaleX(0.8794);">FILE</div>
<div class="t" style="left:75.03px;top:31.84px;font-size:12px;line-height:12px;color:#2b579a;font-family:'Liberation Sans',sans-serif;transform:scaleX(1.0127);">HOME</div>
<div class="t" style="left:139.08px;top:31.84px;font-size:12px;line-height:12px;color:#444444;font-family:'Liberation Sans',sans-serif;transform:scaleX(0.8475);">INSERT</div>
<div class="t" style="left:205.13px;top:31.84px;font-size:12px;line-height:12px;color:#444444;font-family:'Liberation Sans',sans-serif;transform:scaleX(0.9083);">DESIGN</div>
<div class="t" style="left:274.12px;top:31.84px;font-size:12px;line-height:12px;color:#444444;font-family:'Liberation Sans',sans-serif;transform:scaleX(0.9178);">PAGE LAYOUT</div>
<div class="t" style="left:378.20px;top:31.84px;font-size:12px;line-height:12px;color:#444444;font-family:'Liberation Sans',sans-serif;transform:scaleX(0.8321);">REFERENCES</div>
<div class="t" style="left:474.07px;top:31.84px;font-size:12px;line-height:12px;color:#444444;font-family:'Liberation Sans',sans-serif;transform:scaleX(0.9677);">MAILINGS</div>
<div class="t" style="left:556.15px;top:31.84px;font-size:12px;line-height:12px;color:#444444;font-family:'Liberation Sans',sans-serif;transform:scaleX(0.8851);">REVIEW</div>
<div class="t" style="left:626.95px;top:31.84px;font-size:12px;line-height:12px;color:#444444;font-family:'Liberation Sans',sans-serif;transform:scaleX(0.8841);">VIEW</div>
<div class="t" style="left:682.17px;top:31.84px;font-size:12px;line-height:12px;color:#444444;font-family:'Liberation Sans',sans-serif;transform:scaleX(0.8633);">DEVELOPER</div>
<div class="t" style="left:1488.94px;top:31.14px;font-size:12px;line-height:12px;color:#444444;font-family:'Liberation Sans',sans-serif;transform:scaleX(0.9804);">Ivan Walsh</div>
<div class="t" style="left:45.10px;top:128.99px;font-size:11px;line-height:11px;color:#555555;font-family:'Liberation Sans',sans-serif;transform:scaleX(1.0879);">Clipboard</div>
<div class="t" style="left:268.73px;top:129.09px;font-size:11px;line-height:11px;color:#555555;font-family:'Liberation Sans',sans-serif;transform:scaleX(1.1061);">Font</div>
<div class="t" style="left:497.78px;top:128.99px;font-size:11px;line-height:11px;color:#555555;font-family:'Liberation Sans',sans-serif;transform:scaleX(1.0435);">Paragraph</div>
<div class="t" style="left:1033.52px;top:128.99px;font-size:11px;line-height:11px;color:#555555;font-family:'Liberation Sans',sans-serif;transform:scaleX(0.9795);">Styles</div>
<div class="t" style="left:1487.72px;top:128.69px;font-size:11px;line-height:11px;color:#555555;font-family:'Liberation Sans',sans-serif;transform:scaleX(1.1165);">Editing</div>
<div class="r" style="left:157px;top:54px;width:1px;height:84px;background:#e1e1e1"></div>
<div class="r" style="left:420px;top:54px;width:1px;height:84px;background:#e1e1e1"></div>
<div class="r" style="left:646px;top:54px;width:1px;height:84px;background:#e1e1e1"></div>
<div class="r" style="left:1467px;top:54px;width:1px;height:84px;background:#e1e1e1"></div>
<div class="r" style="left:1546px;top:54px;width:1px;height:84px;background:#e1e1e1"></div>
<svg style="left:10px;top:2px" width="17" height="17" viewBox="0 0 17 17"><path d="M0 2.2L9.5 0.5V16.5L0 14.8Z" fill="#2b579a"/><rect x="9" y="2" width="7.3" height="13" fill="#fff" stroke="#2b579a" stroke-width="1.2"/><path d="M10 5.3H14M10 7.5H14M10 9.7H14M10 11.9H14" stroke="#2b579a" stroke-width="1"/><path d="M2.2 6.2L3.6 11.6L5.1 7.6L6.6 11.6L8 6.2" fill="none" stroke="#fff" stroke-width="1.15"/></svg>
<svg style="left:40px;top:4px" width="14" height="14" viewBox="0 0 14 14"><rect x="0" y="0" width="14" height="14" fill="#8c4aa8"/><rect x="2" y="1.3" width="10" height="5.8" fill="#fff"/><rect x="4.5" y="9.2" width="7" height="4.8" fill="#fff"/><rect x="5.5" y="10.8" width="1.8" height="3.2" fill="#8c4aa8"/><rect x="0" y="0" width="14" height="14" fill="none" stroke="#8c4aa8" stroke-width="0.8"/></svg>
<svg style="left:68px;top:3px" width="16" height="15" viewBox="0 0 16 15"><path d="M3 5.5H9.5A4.3 4.3 0 0 1 9.5 14H8.5" fill="none" stroke="#3a78c2" stroke-width="2.2"/><path d="M0.8 5.5L6.3 1V10Z" fill="#3a78c2"/></svg>
<svg style="left:89px;top:9px" width="5" height="3" viewBox="0 0 5 3"><path d="M0 0H5L2.5 3Z" fill="#606060"/></svg>
<svg style="left:108px;top:3px" width="15" height="15" viewBox="0 0 15 15"><path d="M5.6 2.2A5.6 5.6 0 1 0 11.6 4.4" fill="none" stroke="#a9a9a9" stroke-width="1.8"/><path d="M8 1L14 2.2L9.4 6.8Z" fill="#a9a9a9"/></svg>
<div class="t" style="left:138.05px;top:2.55px;font-size:6.2px;line-height:6.2px;color:#333;font-family:'Liberation Sans',sans-serif;font-weight:700;transform:scaleX(0.9914);">ABC</div>
<svg style="left:138px;top:9px" width="15" height="10" viewBox="0 0 15 10"><path d="M1.5 4.5L5 8.3L13.5 0.8" fill="none" stroke="#3a78c2" stroke-width="2.6"/></svg>
<svg style="left:165px;top:2px" width="18" height="18" viewBox="0 0 18 18"><path d="M8.7 6V1.6H16.3V7.1H9.5" fill="none" stroke="#666" stroke-width="1.1"/><path d="M10.2 3.5H14.8M10.3 5.5H11M12.2 5.5H14.8" stroke="#777" stroke-width="0.9"/><path d="M10.2 9.4H16.8" stroke="#666" stroke-width="1.1"/><path d="M1.8 8.8H6L8.3 11.1V16.1H1.8Z" fill="none" stroke="#666" stroke-width="1.1"/><path d="M5.8 8.8V11.2H8.3" fill="none" stroke="#666" stroke-width="1"/><path d="M2.6 4.4Q4.8 1.7 7.4 4.6V6.6" fill="none" stroke="#3a78c2" stroke-width="1.1"/><path d="M5.5 6.1H9.3L7.4 8.3Z" fill="#3a78c2"/></svg>
<svg style="left:194px;top:9px" width="7" height="7" viewBox="0 0 7 7"><path d="M0.8 0.5H6" stroke="#555" stroke-width="1"/><path d="M0.8 3H6L3.4 5.8Z" fill="#555"/></svg>
<div class="t" style="left:1464.40px;top:5.22px;font-size:12.5px;line-height:12.5px;color:#b3b3b3;font-family:'Liberation Sans',sans-serif;font-weight:700;transform:scaleX(1.0667);">?</div>
<svg style="left:1490px;top:5px" width="15" height="12" viewBox="0 0 15 12"><rect x="1" y="1" width="13" height="10" fill="none" stroke="#b3b3b3" stroke-width="1"/><path d="M1 3.5H14" stroke="#b3b3b3" stroke-width="0.9"/><path d="M7.5 10V5.5M5.3 7.6L7.5 5.5L9.7 7.6" fill="none" stroke="#b3b3b3" stroke-width="1"/></svg>
<div class="r" style="left:1522px;top:12px;width:9px;height:2px;background:#b3b3b3"></div>
<svg style="left:1550px;top:5px" width="12" height="12" viewBox="0 0 12 12"><rect x="1" y="4" width="7.5" height="6.5" fill="none" stroke="#b3b3b3" stroke-width="1.1"/><path d="M3.5 4V1.5H10.5V8H8.5" fill="none" stroke="#b3b3b3" stroke-width="1.1"/></svg>
<svg style="left:1579px;top:5px" width="12" height="12" viewBox="0 0 12 12"><path d="M1.5 1.5L10.5 10.5M10.5 1.5L1.5 10.5" stroke="#b3b3b3" stroke-width="1.8"/></svg>
<svg style="left:1554px;top:35px" width="5.5" height="3" viewBox="0 0 5.5 3"><path d="M0 0H5.5L2.75 3Z" fill="#555"/></svg>
<div class="r" style="left:1567px;top:27px;width:22px;height:21px;background:#1d4a7f;border-radius:3px"></div>
<div class="t" style="left:1572.52px;top:29.61px;font-size:17px;line-height:17px;color:#ffffff;font-family:'Liberation Sans',sans-serif;transform:scaleX(0.9412);">K</div>
<svg style="left:12px;top:57px" width="30" height="32" viewBox="0 0 30 32"><rect x="0.9" y="3.9" width="24" height="25.1" rx="1.6" fill="#ebc47c"/><rect x="6.1" y="4.1" width="13.8" height="3.7" fill="#6b6b6b"/><rect x="10.2" y="0.9" width="5.6" height="3.6" fill="#6b6b6b"/><rect x="11.9" y="2" width="2.2" height="1.6" fill="#fff"/><rect x="6" y="7.8" width="14" height="1.2" fill="#fff"/><path d="M14.5 11.5H24.6L28.6 15.5V30.6H14.5Z" fill="#fff" stroke="#6f6f6f" stroke-width="1.1"/><path d="M24.3 11.8V15.8H28.4" fill="none" stroke="#6f6f6f" stroke-width="1"/></svg>
<div class="t" style="left:10.91px;top:93.34px;font-size:12px;line-height:12px;color:#444444;font-family:'Liberation Sans',sans-serif;transform:scaleX(0.9274);">Paste</div>
<svg style="left:22px;top:113px" width="5" height="3" viewBox="0 0 5 3"><path d="M0 0H5L2.5 3Z" fill="#555"/></svg>
<svg style="left:49px;top:56px" width="16" height="16" viewBox="0 0 16 16"><path d="M2 0.5L10 9.5M13.5 0.5L5.5 9.5" stroke="#a9a9a9" stroke-width="1.3"/><circle cx="4" cy="12.3" r="2.5" fill="#fff" stroke="#a9a9a9" stroke-width="1.1"/><circle cx="12" cy="12.3" r="2.5" fill="#fff" stroke="#a9a9a9" stroke-width="1.1"/></svg>
<div class="t" style="left:67.79px;top:59.04px;font-size:12px;line-height:12px;color:#a3a3a3;font-family:'Liberation Sans',sans-serif;transform:scaleX(1.0222);">Cut</div>
<svg style="left:48px;top:79px" width="17" height="16" viewBox="0 0 17 16"><path d="M1.5 1.5H6.5L8.5 3.5V11.5H1.5Z" fill="#fff" stroke="#a9a9a9" stroke-width="1"/><path d="M3 4.5H5.5M3 6.5H7M3 8.5H7" stroke="#b5b5b5" stroke-width="0.8"/><path d="M7.5 4.5H12.5L15.5 7.5V14.5H7.5Z" fill="#fff" stroke="#a9a9a9" stroke-width="1"/><path d="M9 8.5H13.5M9 10.5H13.5M9 12.5H13.5" stroke="#b5b5b5" stroke-width="0.8"/></svg>
<div class="t" style="left:67.80px;top:81.84px;font-size:12px;line-height:12px;color:#a3a3a3;font-family:'Liberation Sans',sans-serif;transform:scaleX(0.9993);">Copy</div>
<svg style="left:48px;top:102px" width="18" height="16" viewBox="0 0 18 16"><path d="M1 8L5.2 6.2L9.5 10.5L7.8 14.8Z" fill="#ebc47c"/><path d="M6 6.5L10.5 2L14 5.5L9.5 10Z" fill="#6b6b6b"/><path d="M12 1.3L14.3 -0.5L16.9 2.1L15 4.2Z" fill="#6b6b6b"/></svg>
<div class="t" style="left:67.45px;top:105.34px;font-size:12px;line-height:12px;color:#444444;font-family:'Liberation Sans',sans-serif;transform:scaleX(0.9918);">Format Painter</div>
<svg style="left:146px;top:131px" width="8" height="8" viewBox="0 0 8 8"><path d="M0.5 7V0.5H7" fill="none" stroke="#777" stroke-width="1"/><path d="M2.5 2.5L6.5 6.5M3.8 7H7V3.8" fill="none" stroke="#777" stroke-width="1"/></svg>
<svg style="left:409px;top:131px" width="8" height="8" viewBox="0 0 8 8"><path d="M0.5 7V0.5H7" fill="none" stroke="#777" stroke-width="1"/><path d="M2.5 2.5L6.5 6.5M3.8 7H7V3.8" fill="none" stroke="#777" stroke-width="1"/></svg>
<svg style="left:634px;top:131px" width="8" height="8" viewBox="0 0 8 8"><path d="M0.5 7V0.5H7" fill="none" stroke="#777" stroke-width="1"/><path d="M2.5 2.5L6.5 6.5M3.8 7H7V3.8" fill="none" stroke="#777" stroke-width="1"/></svg>
<svg style="left:1456px;top:131px" width="8" height="8" viewBox="0 0 8 8"><path d="M0.5 7V0.5H7" fill="none" stroke="#777" stroke-width="1"/><path d="M2.5 2.5L6.5 6.5M3.8 7H7V3.8" fill="none" stroke="#777" stroke-width="1"/></svg>
<div class="r" style="left:162px;top:61px;width:94px;height:23px;background:#fff;border:1px solid #ababab;box-sizing:border-box"></div>
<div class="r" style="left:255px;top:61px;width:44px;height:23px;background:#fff;border:1px solid #ababab;box-sizing:border-box"></div>
<div class="t" style="left:165.50px;top:66.84px;font-size:12px;line-height:12px;color:#262626;font-family:'Liberation Sans',sans-serif;transform:scaleX(0.9991);">Arial</div>
<svg style="left:245px;top:71px" width="6" height="3.2" viewBox="0 0 6 3.2"><path d="M0 0H6L3.0 3.2Z" fill="#555"/></svg>
<div class="t" style="left:258.75px;top:66.84px;font-size:12px;line-height:12px;color:#262626;font-family:'Liberation Sans',sans-serif;transform:scaleX(0.9500);">10</div>
<svg style="left:288px;top:71px" width="6" height="3.2" viewBox="0 0 6 3.2"><path d="M0 0H6L3.0 3.2Z" fill="#555"/></svg>
<div class="t" style="left:305.20px;top:67.47px;font-size:13.5px;line-height:13.5px;color:#444444;font-family:'Liberation Sans',sans-serif;transform:scaleX(1.0471);">A</div>
<svg style="left:313px;top:64px" width="6" height="4" viewBox="0 0 6 4"><path d="M0 3.5H5L2.5 0.5Z" fill="#3a78c2"/></svg>
<div class="t" style="left:328.10px;top:69.59px;font-size:11px;line-height:11px;color:#444444;font-family:'Liberation Sans',sans-serif;transform:scaleX(0.9843);">A</div>
<svg style="left:334.8px;top:64.5px" width="6" height="4" viewBox="0 0 6 4"><path d="M0 0.5H5.3L2.65 3.3Z" fill="#3a78c2"/></svg>
<div class="r" style="left:347px;top:61px;width:1px;height:22px;background:#e1e1e1"></div>
<div class="t" style="left:355.10px;top:66.42px;font-size:12.5px;line-height:12.5px;color:#444444;font-family:'Liberation Sans',sans-serif;transform:scaleX(0.9836);">Aa</div>
<svg style="left:375px;top:71px" width="5" height="3" viewBox="0 0 5 3"><path d="M0 0H5L2.5 3Z" fill="#555"/></svg>
<div class="r" style="left:389px;top:61px;width:1px;height:22px;background:#e1e1e1"></div>
<svg style="left:394px;top:60px" width="24" height="24" viewBox="0 0 24 24"><path d="M5 12.7L8.3 4.9L11.2 10.5M6.5 10.2H10.3" fill="none" stroke="#333" stroke-width="1.1"/><path d="M15.1 7L18.7 10.6L12.6 16.7L9.2 12.8Z" fill="#e57f93"/><path d="M7.3 14.2L11.7 18.4L9.8 19.5L6.1 15.6Z" fill="#e57f93"/></svg>
<div class="t" style="left:167.82px;top:97.42px;font-size:12.5px;line-height:12.5px;color:#444444;font-family:'Liberation Sans',sans-serif;font-weight:700;transform:scaleX(0.9626);">B</div>
<div class="t" style="left:191.17px;top:96.69px;font-size:13.5px;line-height:13.5px;color:#444444;font-family:'Liberation Serif',serif;font-weight:700;font-style:italic;transform:scaleX(1.2231);">I</div>
<div class="t" style="left:210.98px;top:96.84px;font-size:12px;line-height:12px;color:#444444;font-family:'Liberation Sans',sans-serif;transform:scaleX(1.2427);">U</div>
<div class="r" style="left:212px;top:108px;width:9px;height:1.2px;background:#444444"></div>
<svg style="left:231px;top:102px" width="5" height="3" viewBox="0 0 5 3"><path d="M0 0H5L2.5 3Z" fill="#555"/></svg>
<div class="t" style="left:242.59px;top:98.27px;font-size:11.5px;line-height:11.5px;color:#444444;font-family:'Liberation Sans',sans-serif;transform:scaleX(0.9005);">abc</div>
<div class="r" style="left:243px;top:103px;width:16px;height:1px;background:#444444"></div>
<div class="t" style="left:266.93px;top:97.32px;font-size:12.5px;line-height:12.5px;color:#444444;font-family:'Liberation Sans',sans-serif;font-weight:700;transform:scaleX(1.1009);">x</div>
<div class="t" style="left:275.66px;top:104.84px;font-size:5.5px;line-height:5.5px;color:#3a78c2;font-family:'Liberation Sans',sans-serif;font-weight:700;transform:scaleX(1.2500);">2</div>
<div class="t" style="left:288.93px;top:97.32px;font-size:12.5px;line-height:12.5px;color:#444444;font-family:'Liberation Sans',sans-serif;font-weight:700;transform:scaleX(1.1009);">x</div>
<div class="t" style="left:297.66px;top:96.94px;font-size:5.5px;line-height:5.5px;color:#3a78c2;font-family:'Liberation Sans',sans-serif;font-weight:700;transform:scaleX(1.2500);">2</div>
<div class="r" style="left:310px;top:92px;width:1px;height:22px;background:#e1e1e1"></div>
<svg style="left:318px;top:95px" width="16" height="15" viewBox="0 0 16 15"><path d="M1.8 13.2L5.6 1.2H9.3L13.3 13.2H10.1L9.3 10.5H5.6L4.8 13.2Z" fill="#fff" stroke="#3a78c2" stroke-width="1.15" stroke-linejoin="round"/><path d="M6.3 8.2L7.45 4.3L8.6 8.2Z" fill="#3a78c2"/></svg>
<svg style="left:338px;top:102px" width="5" height="3" viewBox="0 0 5 3"><path d="M0 0H5L2.5 3Z" fill="#555"/></svg>
<div class="t" style="left:350.68px;top:94.18px;font-size:9px;line-height:9px;color:#444444;font-family:'Liberation Sans',sans-serif;font-weight:700;transform:scaleX(0.8219);">ab</div>
<svg style="left:350px;top:94px" width="18" height="14" viewBox="0 0 18 14"><path d="M7.8 10L14.6 2.6L17.6 5.4L10.6 12.6Z" fill="#707070"/><path d="M4.3 12.6L7.8 10.3L10 12.5L4.3 12.9Z" fill="#6a6a80"/></svg>
<div class="r" style="left:351px;top:107px;width:16px;height:4px;background:#ffff00"></div>
<svg style="left:373px;top:102px" width="5" height="3" viewBox="0 0 5 3"><path d="M0 0H5L2.5 3Z" fill="#555"/></svg>
<div class="t" style="left:388.70px;top:95.80px;font-size:13px;line-height:13px;color:#444444;font-family:'Liberation Sans',sans-serif;transform:scaleX(1.0758);">A</div>
<div class="r" style="left:385px;top:107px;width:16px;height:4px;background:#ff0000"></div>
<svg style="left:407px;top:102px" width="5" height="3" viewBox="0 0 5 3"><path d="M0 0H5L2.5 3Z" fill="#555"/></svg>
<svg style="left:428px;top:63px" width="15" height="16" viewBox="0 0 15 16"><circle cx="1.8" cy="2" r="1.3" fill="#3a78c2"/><circle cx="1.8" cy="8" r="1.3" fill="#3a78c2"/><circle cx="1.8" cy="14" r="1.3" fill="#3a78c2"/><path d="M5 2.5H13M5 8.5H13M5 14.5H13" stroke="#555" stroke-width="1"/></svg>
<svg style="left:450px;top:71px" width="5" height="3" viewBox="0 0 5 3"><path d="M0 0H5L2.5 3Z" fill="#555"/></svg>
<svg style="left:462px;top:63px" width="16" height="16" viewBox="0 0 16 16"><text x="0" y="4.5" font-size="5.5" font-family="Liberation Sans" font-weight="700" fill="#3a78c2">1</text><text x="0" y="10.5" font-size="5.5" font-family="Liberation Sans" font-weight="700" fill="#3a78c2">2</text><text x="0" y="16" font-size="5.5" font-family="Liberation Sans" font-weight="700" fill="#3a78c2">3</text><path d="M5.5 2.5H14.5M5.5 8.5H14.5M5.5 14.5H14.5" stroke="#555" stroke-width="1"/></svg>
<svg style="left:484px;top:71px" width="5" height="3" viewBox="0 0 5 3"><path d="M0 0H5L2.5 3Z" fill="#555"/></svg>
<svg style="left:495px;top:63px" width="18" height="16" viewBox="0 0 18 16"><text x="0" y="4.5" font-size="5" font-family="Liberation Sans" font-weight="700" fill="#3a78c2">1</text><text x="5" y="10" font-size="5" font-family="Liberation Sans" font-weight="700" fill="#3a78c2">a</text><text x="9.5" y="16" font-size="5" font-family="Liberation Sans" font-weight="700" fill="#3a78c2">i</text><path d="M5 2.5H16.5M10 8.5H16.5M13 14.5H16.5" stroke="#555" stroke-width="1"/></svg>
<svg style="left:516px;top:71px" width="5" height="3" viewBox="0 0 5 3"><path d="M0 0H5L2.5 3Z" fill="#555"/></svg>
<div class="r" style="left:530px;top:61px;width:1px;height:22px;background:#e1e1e1"></div>
<svg style="left:538px;top:65px" width="17" height="13" viewBox="0 0 17 13"><path d="M6 1.5H16M8.5 4.5H16M8.5 7.5H16M6 10.5H16" stroke="#555" stroke-width="1"/><path d="M0.5 6L4.5 2.3V4.9H8V7.1H4.5V9.7Z" fill="#3a78c2"/></svg>
<svg style="left:559px;top:65px" width="17" height="13" viewBox="0 0 17 13"><path d="M3 1.5H16M8.5 4.5H16M8.5 7.5H16M3 10.5H16" stroke="#555" stroke-width="1"/><path d="M8 6L4 2.3V4.9H0.5V7.1H4V9.7Z" fill="#3a78c2"/></svg>
<div class="r" style="left:583px;top:61px;width:1px;height:22px;background:#e1e1e1"></div>
<div class="t" style="left:592.50px;top:64.07px;font-size:7px;line-height:7px;color:#3a78c2;font-family:'Liberation Sans',sans-serif;font-weight:700;transform:scaleX(1.1514);">A</div>
<div class="t" style="left:592.63px;top:73.57px;font-size:7px;line-height:7px;color:#9a4fbd;font-family:'Liberation Sans',sans-serif;font-weight:700;transform:scaleX(1.2870);">Z</div>
<svg style="left:599px;top:63px" width="8" height="17" viewBox="0 0 8 17"><path d="M3.8 0.5V15" stroke="#555" stroke-width="1.2"/><path d="M0.8 11.5L3.8 15.5L6.8 11.5" fill="none" stroke="#555" stroke-width="1.2"/></svg>
<div class="r" style="left:614px;top:61px;width:1px;height:22px;background:#e1e1e1"></div>
<div class="t" style="left:623.75px;top:67.00px;font-size:13px;line-height:13px;color:#555;font-family:'Liberation Sans',sans-serif;font-weight:700;transform:scaleX(1.6484);">¶</div>
<div class="r" style="left:425px;top:92px;width:22px;height:23px;background:#c5d9f1"></div>
<svg style="left:429px;top:97px" width="15" height="12" viewBox="0 0 15 12"><path d="M0 1.5H14M0 4.5H9M0 7.5H14M0 10.5H9" stroke="#555" stroke-width="1"/></svg>
<svg style="left:451px;top:97px" width="15" height="12" viewBox="0 0 15 12"><path d="M0 1.5H14M2.5 4.5H11.5M0 7.5H14M2.5 10.5H11.5" stroke="#555" stroke-width="1"/></svg>
<svg style="left:473px;top:97px" width="15" height="12" viewBox="0 0 15 12"><path d="M0 1.5H14M5 4.5H14M0 7.5H14M5 10.5H14" stroke="#555" stroke-width="1"/></svg>
<svg style="left:495px;top:97px" width="15" height="12" viewBox="0 0 15 12"><path d="M0 1.5H14M0 4.5H14M0 7.5H14M0 10.5H14" stroke="#555" stroke-width="1"/></svg>
<div class="r" style="left:517px;top:92px;width:1px;height:22px;background:#e1e1e1"></div>
<svg style="left:525px;top:94px" width="16" height="17" viewBox="0 0 16 17"><path d="M2.5 1.5V15.5" stroke="#3a78c2" stroke-width="1.2"/><path d="M0 4L2.5 1L5 4M0 13L2.5 16L5 13" fill="none" stroke="#3a78c2" stroke-width="1.2"/><path d="M7 4H14.5M7 7.5H14.5M7 11H14.5M7 14.5H14.5" stroke="#555" stroke-width="1.1"/></svg>
<svg style="left:545px;top:103px" width="5" height="3" viewBox="0 0 5 3"><path d="M0 0H5L2.5 3Z" fill="#555"/></svg>
<div class="r" style="left:559px;top:92px;width:1px;height:22px;background:#e1e1e1"></div>
<svg style="left:566px;top:94px" width="18" height="18" viewBox="0 0 18 18"><path d="M3 8L8 3L12.5 7.5L7.5 12.5Z" fill="#fff" stroke="#555" stroke-width="1"/><path d="M7 1V6" stroke="#555" stroke-width="1"/><path d="M13 6Q15.5 8.5 14 11" fill="none" stroke="#3a78c2" stroke-width="1.6"/><rect x="1" y="13" width="15.5" height="3.5" fill="#fff" stroke="#555" stroke-width="1"/></svg>
<svg style="left:589px;top:103px" width="5" height="3" viewBox="0 0 5 3"><path d="M0 0H5L2.5 3Z" fill="#555"/></svg>
<svg style="left:601px;top:95px" width="15" height="15" viewBox="0 0 15 15"><path d="M1 1H14M1 7.5H14M1 1V13M7.5 1V13M14 1V13" stroke="#777" stroke-width="1" stroke-dasharray="1 1"/><path d="M0.5 13.5H14.5" stroke="#555" stroke-width="1.1"/></svg>
<svg style="left:623px;top:103px" width="5" height="3" viewBox="0 0 5 3"><path d="M0 0H5L2.5 3Z" fill="#555"/></svg>
<div class="r" style="left:651px;top:56px;width:809px;height:60px;background:#fff;border:1px solid #b9b9b9;box-sizing:border-box"></div>
<div class="r" style="left:1445px;top:56px;width:1px;height:60px;background:#c8c8c8"></div>
<div class="r" style="left:1445px;top:77px;width:15px;height:1px;background:#c8c8c8"></div>
<div class="r" style="left:1445px;top:96px;width:15px;height:1px;background:#c8c8c8"></div>
<svg style="left:1449px;top:64px" width="7" height="5" viewBox="0 0 7 5"><path d="M0.5 4H6L3.25 0.8Z" fill="#c9c9c9"/></svg>
<svg style="left:1450px;top:86px" width="5.5" height="3" viewBox="0 0 5.5 3"><path d="M0 0H5.5L2.75 3Z" fill="#555"/></svg>
<div class="r" style="left:1450px;top:103px;width:6px;height:1px;background:#555"></div>
<svg style="left:1450px;top:105.5px" width="5.5" height="3" viewBox="0 0 5.5 3"><path d="M0 0H5.5L2.75 3Z" fill="#555"/></svg>
<div class="t" style="left:658.34px;top:71.54px;font-size:15px;line-height:15px;color:#111;font-family:'Liberation Serif',serif;transform:scaleX(1.0477);">AaBbCcI</div>
<div class="t" style="left:731.64px;top:71.73px;font-size:14.5px;line-height:14.5px;color:#111;font-family:'Liberation Sans',sans-serif;font-style:italic;transform:scaleX(1.0175);">AaBbCcl</div>
<div style="position:absolute;left:796px;top:58px;width:65px;height:40px;overflow:hidden"><div style="position:absolute;left:-796px;top:-58px;width:1600px;height:200px">
<div class="t" style="left:804.97px;top:61.42px;font-size:27.5px;line-height:27.5px;color:#2a5a8c;font-family:'Liberation Sans',sans-serif;transform:scaleX(0.5016);">1</div>
<div class="t" style="left:835.30px;top:61.42px;font-size:27.5px;line-height:27.5px;color:#2a5a8c;font-family:'Liberation Sans',sans-serif;transform:scaleX(1.0800);">Ac</div>
</div></div>
<div style="position:absolute;left:868px;top:58px;width:65px;height:40px;overflow:hidden"><div style="position:absolute;left:-868px;top:-58px;width:1600px;height:200px">
<div class="t" style="left:875.28px;top:68.07px;font-size:20px;line-height:20px;color:#2a5a8c;font-family:'Liberation Sans',sans-serif;transform:scaleX(0.8819);">1.1</div>
<div class="t" style="left:916.00px;top:68.07px;font-size:20px;line-height:20px;color:#2a5a8c;font-family:'Liberation Sans',sans-serif;transform:scaleX(1.0800);">Ac</div>
</div></div>
<div style="position:absolute;left:940px;top:58px;width:65.5px;height:40px;overflow:hidden"><div style="position:absolute;left:-940px;top:-58px;width:1600px;height:200px">
<div class="t" style="left:946.98px;top:68.72px;font-size:19px;line-height:19px;color:#2a5a8c;font-family:'Liberation Sans',sans-serif;transform:scaleX(0.9251);">1.1.1</div>
<div class="t" style="left:999.80px;top:68.72px;font-size:19px;line-height:19px;color:#2a5a8c;font-family:'Liberation Sans',sans-serif;">A</div>
</div></div>
<div style="position:absolute;left:1012px;top:58px;width:65.5px;height:40px;overflow:hidden"><div style="position:absolute;left:-1012px;top:-58px;width:1600px;height:200px">
<div class="t" style="left:1018.71px;top:68.72px;font-size:19px;line-height:19px;color:#2a5a8c;font-family:'Liberation Sans',sans-serif;transform:scaleX(0.7639);">1.1.1.1</div>
<div class="t" style="left:1074.00px;top:68.72px;font-size:19px;line-height:19px;color:#2a5a8c;font-family:'Liberation Sans',sans-serif;">A</div>
</div></div>
<div class="t" style="left:1090.33px;top:72.20px;font-size:13px;line-height:13px;color:#1f1f87;font-family:'Liberation Sans',sans-serif;transform:scaleX(0.9957);">1.1.1.1.1</div>
<div class="t" style="left:1161.92px;top:72.20px;font-size:13px;line-height:13px;color:#1f1f87;font-family:'Liberation Sans',sans-serif;transform:scaleX(1.1120);">1.1.1.1.1</div>
<div class="t" style="left:1233.83px;top:70.58px;font-size:15.5px;line-height:15.5px;color:#2a5a8c;font-family:'Liberation Sans',sans-serif;transform:scaleX(1.0045);">1.1.1.1.1</div>
<div class="t" style="left:1307.11px;top:70.58px;font-size:15.5px;line-height:15.5px;color:#2a5a8c;font-family:'Liberation Sans',sans-serif;font-style:italic;transform:scaleX(0.9985);">1.1.1.1.1</div>
<div class="t" style="left:1377.61px;top:70.58px;font-size:15.5px;line-height:15.5px;color:#2a5a8c;font-family:'Liberation Sans',sans-serif;transform:scaleX(0.9391);">1.1.1.1.1.</div>
<div class="t" style="left:669.83px;top:97.24px;font-size:12px;line-height:12px;color:#444444;font-family:'Liberation Sans',sans-serif;transform:scaleX(0.9738);">¶ Body</div>
<div class="t" style="left:733.51px;top:97.24px;font-size:12px;line-height:12px;color:#444444;font-family:'Liberation Sans',sans-serif;transform:scaleX(1.0156);">¶ Caption</div>
<div class="t" style="left:804.34px;top:97.24px;font-size:12px;line-height:12px;color:#444444;font-family:'Liberation Sans',sans-serif;transform:scaleX(0.9977);">Heading 1</div>
<div class="t" style="left:876.53px;top:97.24px;font-size:12px;line-height:12px;color:#444444;font-family:'Liberation Sans',sans-serif;transform:scaleX(1.0064);">Heading 2</div>
<div class="t" style="left:944.33px;top:97.24px;font-size:12px;line-height:12px;color:#444444;font-family:'Liberation Sans',sans-serif;transform:scaleX(0.9742);">¶ Heading 3</div>
<div class="t" style="left:1015.53px;top:97.24px;font-size:12px;line-height:12px;color:#444444;font-family:'Liberation Sans',sans-serif;transform:scaleX(0.9840);">¶ Heading 4</div>
<div class="t" style="left:1087.53px;top:97.24px;font-size:12px;line-height:12px;color:#444444;font-family:'Liberation Sans',sans-serif;transform:scaleX(0.9836);">¶ Heading 5</div>
<div class="t" style="left:1159.52px;top:97.24px;font-size:12px;line-height:12px;color:#444444;font-family:'Liberation Sans',sans-serif;transform:scaleX(0.9915);">¶ Heading 6</div>
<div class="t" style="left:1231.52px;top:97.24px;font-size:12px;line-height:12px;color:#444444;font-family:'Liberation Sans',sans-serif;transform:scaleX(0.9934);">¶ Heading 7</div>
<div class="t" style="left:1303.22px;top:97.24px;font-size:12px;line-height:12px;color:#444444;font-family:'Liberation Sans',sans-serif;transform:scaleX(0.9962);">¶ Heading 8</div>
<div class="t" style="left:1375.22px;top:97.24px;font-size:12px;line-height:12px;color:#444444;font-family:'Liberation Sans',sans-serif;transform:scaleX(0.9924);">¶ Heading 9</div>
<svg style="left:1474px;top:56px" width="17" height="15" viewBox="0 0 17 15"><path d="M1 7.5L3 1.5H6.5V5H9.5V1.5H13L15 7.5V13.5H10V9H6V13.5H1Z" fill="#555"/><rect x="2" y="9.5" width="3" height="3" fill="#fff"/><rect x="11" y="9.5" width="3" height="3" fill="#fff"/></svg>
<div class="t" style="left:1493.83px;top:58.64px;font-size:12px;line-height:12px;color:#444444;font-family:'Liberation Sans',sans-serif;transform:scaleX(1.0065);">Find</div>
<svg style="left:1527px;top:63px" width="5.5" height="3" viewBox="0 0 5.5 3"><path d="M0 0H5.5L2.75 3Z" fill="#555"/></svg>
<div class="t" style="left:1474.52px;top:79.30px;font-size:8.5px;line-height:8.5px;color:#555;font-family:'Liberation Sans',sans-serif;font-weight:700;transform:scaleX(1.0995);">a</div>
<div class="t" style="left:1480.28px;top:79.30px;font-size:8.5px;line-height:8.5px;color:#aaa;font-family:'Liberation Sans',sans-serif;transform:scaleX(1.3072);">b</div>
<div class="t" style="left:1479.61px;top:86.38px;font-size:9px;line-height:9px;color:#555;font-family:'Liberation Sans',sans-serif;transform:scaleX(1.0787);">a</div>
<div class="t" style="left:1484.99px;top:86.38px;font-size:9px;line-height:9px;color:#3a78c2;font-family:'Liberation Sans',sans-serif;transform:scaleX(1.4049);">c</div>
<svg style="left:1474px;top:88px" width="6" height="6" viewBox="0 0 6 6"><path d="M4.5 0.5V3.5H0.8M2.5 1.8L0.8 3.5L2.5 5.2" fill="none" stroke="#3a78c2" stroke-width="0.9"/></svg>
<div class="t" style="left:1493.89px;top:81.74px;font-size:12px;line-height:12px;color:#444444;font-family:'Liberation Sans',sans-serif;transform:scaleX(0.9484);">Replace</div>
<svg style="left:1478px;top:102px" width="11" height="15" viewBox="0 0 11 15"><path d="M1 0.8V12L3.8 9.4L6.3 14.3L8.3 13.3L5.9 8.5H9.6Z" fill="#fff" stroke="#555" stroke-width="0.95" stroke-linejoin="round"/></svg>
<div class="t" style="left:1493.80px;top:104.54px;font-size:12px;line-height:12px;color:#444444;font-family:'Liberation Sans',sans-serif;transform:scaleX(0.9266);">Select</div>
<svg style="left:1528px;top:109.5px" width="5.5" height="3" viewBox="0 0 5.5 3"><path d="M0 0H5.5L2.75 3Z" fill="#555"/></svg>
<svg style="left:1580px;top:130px" width="11" height="8" viewBox="0 0 11 8"><path d="M1 6.5L5.5 2L10 6.5" fill="none" stroke="#555" stroke-width="2.1"/></svg>
<svg style="left:176px;top:838px" width="28" height="22" viewBox="0 0 28 22"><path d="M10.8 4.5H6.5V14.5H10.8L12.5 16.3L14.2 14.5H19M14.2 4.5H19V5.8M10.8 4.5L12.5 6.2L14.2 4.5M12.5 6.2V16" fill="none" stroke="#fff" stroke-width="1.1"/><path d="M15.6 7.6L19.6 12.4M19.6 7.6L15.6 12.4" stroke="#fff" stroke-width="1.5"/></svg>
<div class="r" style="left:1346px;top:838px;width:38px;height:22px;background:#1f4a84"></div>
<svg style="left:1318px;top:840px" width="18" height="18" viewBox="0 0 18 18"><path d="M2.5 2.5H8.5V13.5H2.5Z M9.5 2.5H14.5V13.5H9.5Z" fill="none" stroke="#fff" stroke-width="1"/><path d="M4 4.5H14M4 6.5H14M4 8.5H14M4 10.5H14M4 12.5H14" stroke="#fff" stroke-width="0.9"/><path d="M9 3V15.5" stroke="#fff" stroke-width="1.2"/></svg>
<svg style="left:1357px;top:841px" width="17" height="15" viewBox="0 0 17 15"><rect x="1.5" y="1.5" width="13" height="12" fill="none" stroke="#fff" stroke-width="1.1"/><path d="M3.5 3.5H12.5M3.5 5.5H12.5M3.5 7.5H12.5M3.5 9.5H12.5M3.5 11.5H12.5" stroke="#fff" stroke-width="0.9"/></svg>
<svg style="left:1395px;top:841px" width="17" height="16" viewBox="0 0 17 16"><path d="M9 12.5H1.5V1.5H13V6" fill="none" stroke="#fff" stroke-width="1"/><path d="M3 3.5H11M3 5.5H9M3 7.5H7.5M3 9.5H6.5" stroke="#fff" stroke-width="0.9"/><circle cx="11.2" cy="10" r="4" fill="#fff"/><path d="M9.3 8.2L10.8 9.8L9.8 12.5M12.2 7L12.6 9.2L14.4 9.6" fill="none" stroke="#2b579a" stroke-width="1"/></svg>
<div class="r" style="left:1427px;top:848px;width:6px;height:2px;background:#fff"></div>
<div class="r" style="left:1437px;top:848px;width:100px;height:1px;background:#fff"></div>
<div class="r" style="left:1463px;top:843px;width:4px;height:11px;background:#fff"></div>
<div class="r" style="left:1487px;top:845px;width:1px;height:7px;background:#fff"></div>
<div class="r" style="left:1541px;top:848px;width:8.5px;height:2px;background:#fff"></div>
<div class="r" style="left:1544.25px;top:844px;width:2px;height:10px;background:#fff"></div>
<div class="t" style="left:6.48px;top:844.17px;font-size:11.5px;line-height:11.5px;color:#ffffff;font-family:'Liberation Sans',sans-serif;transform:scaleX(0.8964);">PAGE 1 OF 21</div>
<div class="t" style="left:93.62px;top:844.07px;font-size:11.5px;line-height:11.5px;color:#ffffff;font-family:'Liberation Sans',sans-serif;transform:scaleX(0.9398);">3521 WORDS</div>
<div class="t" style="left:212.72px;top:844.07px;font-size:11.5px;line-height:11.5px;color:#ffffff;font-family:'Liberation Sans',sans-serif;transform:scaleX(0.8470);">ENGLISH (UNITED STATES)</div>
<div class="t" style="left:1563.97px;top:844.07px;font-size:11.5px;line-height:11.5px;color:#ffffff;font-family:'Liberation Sans',sans-serif;transform:scaleX(0.9305);">57%</div>
</body></html>
